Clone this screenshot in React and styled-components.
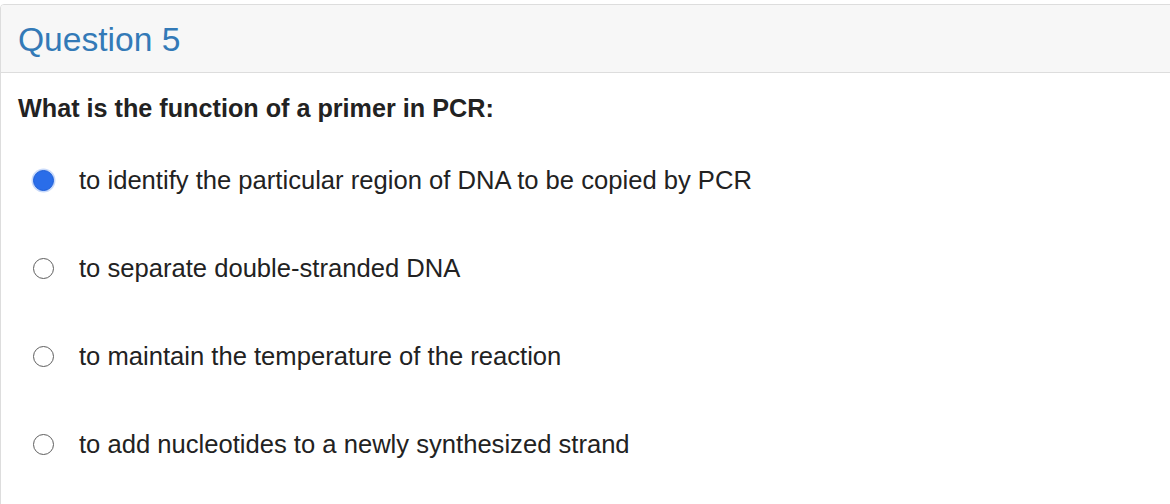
import React from "react";
import styled, { createGlobalStyle } from "styled-components";

const Global = createGlobalStyle`
  html, body { margin: 0; padding: 0; background: #ffffff; }
  body { font-family: "Liberation Sans", Arial, Helvetica, sans-serif; overflow: hidden; }
  * { box-sizing: border-box; }
`;

const Page = styled.div`
  padding-top: 4px;
  height: 504px;
  overflow: hidden;
`;

const Panel = styled.section`
  margin-right: -12px;
  min-height: 540px;
  border: 1px solid #dddddd;
  border-radius: 4px 4px 0 0;
  background: #ffffff;
`;

const Header = styled.header`
  height: 68px;
  display: flex;
  align-items: center;
  padding: 2px 0 0 17px;
  background: #f7f7f7;
  border-bottom: 1px solid #dddddd;
  border-radius: 3px 3px 0 0;
`;

const Title = styled.h2`
  margin: 0;
  font-size: 33.6px;
  font-weight: 400;
  line-height: 1;
  color: #337ab7;
`;

const Body = styled.div`
  padding: 20px 17px 0 17px;
`;

const Prompt = styled.p`
  margin: 0 0 14px 0;
  font-size: 25.2px;
  line-height: 30px;
  font-weight: 700;
  color: #222222;
`;

const OptionList = styled.div`
  display: flex;
  flex-direction: column;
`;

const Option = styled.label`
  height: 88px;
  display: flex;
  align-items: center;
  gap: 25px;
  padding-left: 15px;
  cursor: pointer;
`;

const Radio = styled.span`
  flex: none;
  width: 21px;
  height: 21px;
  margin-top: -1px;
  border-radius: 50%;
  background: ${(p) => (p.$checked ? "#2a6de9" : "#ffffff")};
  border: ${(p) => (p.$checked ? "1.5px solid #1e5fd8" : "1.5px solid #5e5e5e")};
  box-shadow: ${(p) => (p.$checked ? "0 0 0 1.5px #c9dafa" : "none")};
`;

const OptionText = styled.span`
  font-size: 25.6px;
  line-height: 30px;
  margin-top: -2px;
  color: #222222;
`;

const options = [
  "to identify the particular region of DNA to be copied by PCR",
  "to separate double-stranded DNA",
  "to maintain the temperature of the reaction",
  "to add nucleotides to a newly synthesized strand",
];

export default function App() {
  return (
    <>
      <Global />
      <Page>
        <Panel>
          <Header>
            <Title>Question 5</Title>
          </Header>
          <Body>
            <Prompt>What is the function of a primer in PCR:</Prompt>
            <OptionList>
              {options.map((o, i) => (
                <Option key={i}>
                  <Radio $checked={i === 0} />
                  <OptionText>{o}</OptionText>
                </Option>
              ))}
            </OptionList>
          </Body>
        </Panel>
      </Page>
    </>
  );
}
